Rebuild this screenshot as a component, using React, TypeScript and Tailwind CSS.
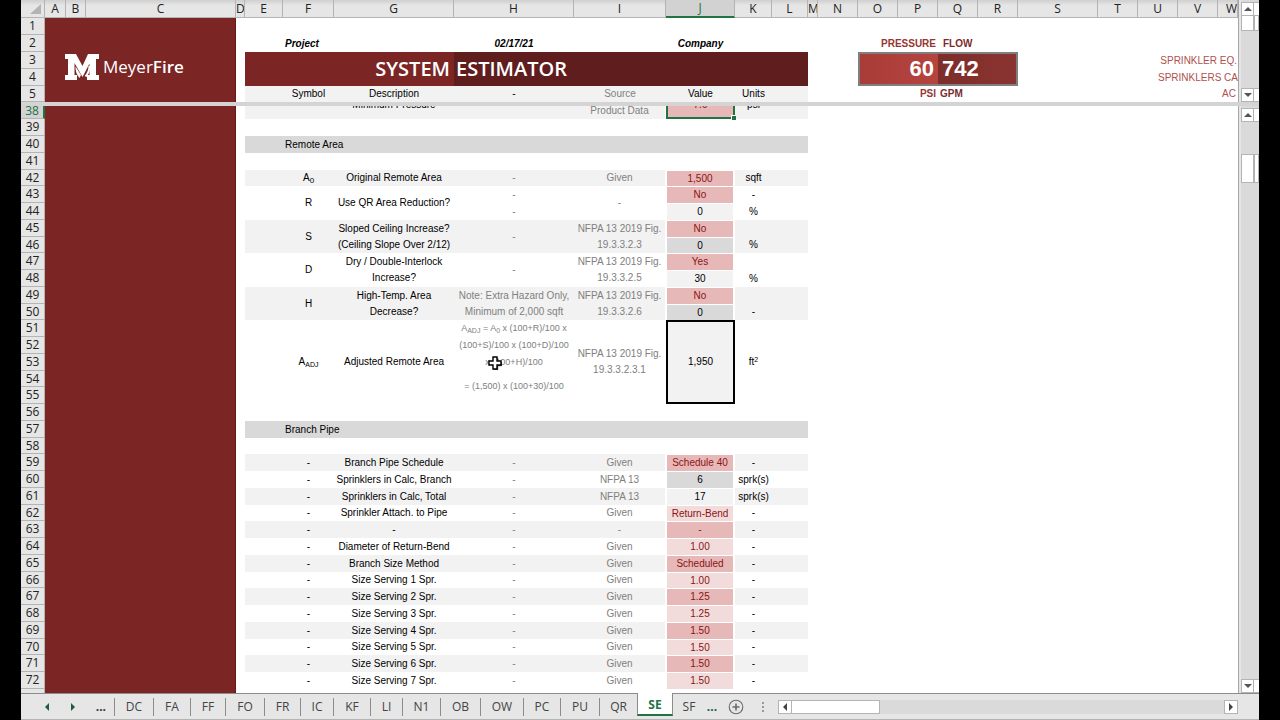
import type { ReactNode } from 'react';
import clsx from 'clsx';

interface Column {
  name: string;
  width: string;
}

interface CellData {
  value: ReactNode;
  span?: number;
}

type CellInput = CellData | string;

interface SheetRow {
  n: number;
  section?: string;
  stripe?: boolean;
  symbol?: CellInput;
  description?: CellInput;
  note?: CellInput;
  source?: CellInput;
  value?: CellInput;
  tone?: keyof typeof TONES;
  units?: CellInput;
}

const TONES = {
  input: 'bg-[#e6b8b7] text-[#8c1414] border-t border-l border-r-2 border-white',
  inputLight: 'bg-[#f2dcdb] text-[#8c1414] border-t border-l border-r-2 border-white',
  calc: 'bg-[#f2f2f2] text-black border-t border-l border-r-2 border-white',
  calcDark: 'bg-[#d9d9d9] text-black border-t border-l border-r-2 border-white',
  result: 'bg-[#f2f2f2] text-black border-2 border-black',
  selected: 'bg-[#e6b8b7] text-[#8c1414] border-2 border-[#217346] relative',
};

const COLUMNS: Column[] = [
  { name: 'A', width: 'w-[21px]' },
  { name: 'B', width: 'w-[20px]' },
  { name: 'C', width: 'w-[150px]' },
  { name: 'D', width: 'w-[9px]' },
  { name: 'E', width: 'w-[38px]' },
  { name: 'F', width: 'w-[51px]' },
  { name: 'G', width: 'w-[120px]' },
  { name: 'H', width: 'w-[120px]' },
  { name: 'I', width: 'w-[92px]' },
  { name: 'J', width: 'w-[69px]' },
  { name: 'K', width: 'w-[37px]' },
  { name: 'L', width: 'w-[36px]' },
  { name: 'M', width: 'w-[10px]' },
  { name: 'N', width: 'w-[40px]' },
  { name: 'O', width: 'w-[40px]' },
  { name: 'P', width: 'w-[40px]' },
  { name: 'Q', width: 'w-[40px]' },
  { name: 'R', width: 'w-[40px]' },
  { name: 'S', width: 'w-[80px]' },
  { name: 'T', width: 'w-[40px]' },
  { name: 'U', width: 'w-[40px]' },
  { name: 'V', width: 'w-[40px]' },
  { name: 'W', width: '' },
];

const FORMULA = (
  <>
    <p>
      A<sub className="text-[7px]">ADJ</sub> = A<sub className="text-[7px]">0</sub> x (100+R)/100 x
    </p>
    <p>(100+S)/100 x (100+D)/100</p>
    <p>x (100+H)/100</p>
    <p className="mt-[7px]">= (1,500) x (100+30)/100</p>
    <CrossCursor />
  </>
);

const ROWS: SheetRow[] = [
  {
    n: 37,
    stripe: true,
    symbol: { value: '-', span: 2 },
    description: { value: 'Minimum Pressure', span: 2 },
    note: { value: '', span: 2 },
    source: '',
    value: { value: '7.0', span: 2 },
    tone: 'selected',
    units: { value: 'psi', span: 2 },
  },
  { n: 38, stripe: true, source: 'Product Data' },
  { n: 39 },
  { n: 40, section: 'Remote Area' },
  { n: 41 },
  {
    n: 42,
    stripe: true,
    symbol: {
      value: (
        <>
          A<sub className="text-[8px]">0</sub>
        </>
      ),
    },
    description: 'Original Remote Area',
    note: '-',
    source: 'Given',
    value: '1,500',
    tone: 'input',
    units: 'sqft',
  },
  {
    n: 43,
    symbol: { value: 'R', span: 2 },
    description: { value: 'Use QR Area Reduction?', span: 2 },
    note: '-',
    source: { value: '-', span: 2 },
    value: 'No',
    tone: 'input',
    units: '-',
  },
  { n: 44, note: '-', value: '0', tone: 'calc', units: '%' },
  {
    n: 45,
    stripe: true,
    symbol: { value: 'S', span: 2 },
    description: { value: 'Sloped Ceiling Increase? (Ceiling Slope Over 2/12)', span: 2 },
    note: { value: '-', span: 2 },
    source: { value: 'NFPA 13 2019 Fig. 19.3.3.2.3', span: 2 },
    value: 'No',
    tone: 'input',
    units: '',
  },
  { n: 46, stripe: true, value: '0', tone: 'calcDark', units: '%' },
  {
    n: 47,
    symbol: { value: 'D', span: 2 },
    description: { value: 'Dry / Double-Interlock Increase?', span: 2 },
    note: { value: '-', span: 2 },
    source: { value: 'NFPA 13 2019 Fig. 19.3.3.2.5', span: 2 },
    value: 'Yes',
    tone: 'input',
    units: '',
  },
  { n: 48, value: '30', tone: 'calc', units: '%' },
  {
    n: 49,
    stripe: true,
    symbol: { value: 'H', span: 2 },
    description: { value: 'High-Temp. Area Decrease?', span: 2 },
    note: { value: 'Note: Extra Hazard Only, Minimum of 2,000 sqft', span: 2 },
    source: { value: 'NFPA 13 2019 Fig. 19.3.3.2.6', span: 2 },
    value: 'No',
    tone: 'input',
    units: '',
  },
  { n: 50, stripe: true, value: '0', tone: 'calcDark', units: '-' },
  {
    n: 51,
    symbol: {
      value: (
        <>
          A<sub className="text-[7px]">ADJ</sub>
        </>
      ),
      span: 5,
    },
    description: { value: 'Adjusted Remote Area', span: 5 },
    note: { value: FORMULA, span: 5 },
    source: { value: 'NFPA 13 2019 Fig. 19.3.3.2.3.1', span: 5 },
    value: { value: '1,950', span: 5 },
    tone: 'result',
    units: {
      value: (
        <>
          ft<sup className="text-[7px]">2</sup>
        </>
      ),
      span: 5,
    },
  },
  { n: 52 },
  { n: 53 },
  { n: 54 },
  { n: 55 },
  { n: 56 },
  { n: 57, section: 'Branch Pipe' },
  { n: 58 },
  pipeRow(59, 'Branch Pipe Schedule', 'Given', 'Schedule 40', 'input'),
  pipeRow(60, 'Sprinklers in Calc, Branch', 'NFPA 13', '6', 'calcDark', 'sprk(s)'),
  pipeRow(61, 'Sprinklers in Calc, Total', 'NFPA 13', '17', 'calc', 'sprk(s)'),
  pipeRow(62, 'Sprinkler Attach. to Pipe', 'Given', 'Return-Bend', 'inputLight'),
  pipeRow(63, '-', '-', '-', 'input'),
  pipeRow(64, 'Diameter of Return-Bend', 'Given', '1.00', 'inputLight'),
  pipeRow(65, 'Branch Size Method', 'Given', 'Scheduled', 'input'),
  pipeRow(66, 'Size Serving 1 Spr.', 'Given', '1.00', 'inputLight'),
  pipeRow(67, 'Size Serving 2 Spr.', 'Given', '1.25', 'input'),
  pipeRow(68, 'Size Serving 3 Spr.', 'Given', '1.25', 'inputLight'),
  pipeRow(69, 'Size Serving 4 Spr.', 'Given', '1.50', 'input'),
  pipeRow(70, 'Size Serving 5 Spr.', 'Given', '1.50', 'inputLight'),
  pipeRow(71, 'Size Serving 6 Spr.', 'Given', '1.50', 'input'),
  pipeRow(72, 'Size Serving 7 Spr.', 'Given', '1.50', 'inputLight'),
];

const TABS = [
  { name: 'DC', width: 'w-[39px]' },
  { name: 'FA', width: 'w-[37px]' },
  { name: 'FF', width: 'w-[35px]' },
  { name: 'FO', width: 'w-[39px]' },
  { name: 'FR', width: 'w-[36px]' },
  { name: 'IC', width: 'w-[33px]' },
  { name: 'KF', width: 'w-[37px]' },
  { name: 'LI', width: 'w-[32px]' },
  { name: 'N1', width: 'w-[38px]' },
  { name: 'OB', width: 'w-[40px]' },
  { name: 'OW', width: 'w-[43px]' },
  { name: 'PC', width: 'w-[37px]' },
  { name: 'PU', width: 'w-[39px]' },
  { name: 'QR', width: 'w-[38px]' },
  { name: 'SE', width: 'w-[36px]' },
  { name: 'SF', width: 'w-[32px]' },
];

function pipeRow(
  n: number,
  description: string,
  source: string,
  value: string,
  tone: keyof typeof TONES,
  units = '-',
): SheetRow {
  return { n, stripe: n % 2 === 1, symbol: '-', description, note: '-', source, value, tone, units };
}

function CrossCursor() {
  return (
    <svg className="absolute left-[34px] top-[36px]" width="14" height="14" viewBox="0 0 14 14" aria-hidden="true">
      <path d="M5 1h4v4h4v4h-4v4h-4v-4h-4v-4h4z" fill="#fff" stroke="#000" strokeWidth="1.4" />
      <path d="M9.7 2v2.8M13.7 6v3.7h-4v4h-4" fill="none" stroke="#000" strokeWidth="0.8" />
    </svg>
  );
}

function Logo() {
  return (
    <div className='flex items-center gap-1 pl-5 pt-[13px] font-["Open_Sans",sans-serif] text-white'>
      <svg width="34" height="26" viewBox="0 0 34 26" aria-hidden="true">
        <path d="M0 0h11l6.500 12L23 0h11v5h-3v16h3v5H22v-5h2.500V9.500L17.500 23 9.500 9v12H12v5H0v-5h3V5H0z" fill="#fff" />
        <path d="M24.500 12c0 4-1 7-4 10.500" fill="none" stroke="#fff" strokeWidth="2" />
        <path d="M10.500 12.500c2 2.500 3 5 5.500 8.500l-1.500 3c-2.500-3-4-6-4-11.500z" fill="#fff" />
      </svg>
      <span className="text-[17px] leading-[26px]">
        Meyer<span className="font-semibold">Fire</span>
      </span>
    </div>
  );
}

function ColGroup() {
  return (
    <colgroup>
      <col className="w-[24px]" />
      {COLUMNS.map((c) => (
        <col key={c.name} className={c.width} />
      ))}
    </colgroup>
  );
}

function RowNumber({ n }: { n: number }) {
  return (
    <th
      scope="row"
      className={clsx(
        'border-b border-[#b4b4b4] p-0 text-center font-["Open_Sans",sans-serif] text-xs font-normal leading-[14px]',
        n === 38 ? 'border-r-2 border-r-[#217346] bg-[#d2d2d2] text-[#217346]' : 'border-r bg-[#e6e6e6] text-[#222]',
      )}
    >
      {n}
    </th>
  );
}

function Cell({ cell, className, children }: { cell?: CellInput; className?: string; children?: ReactNode }) {
  if (cell === undefined) return null;
  const data = typeof cell === 'string' ? { value: cell } : cell;
  return (
    <td rowSpan={data.span} className={clsx('px-0 text-center', className)}>
      {data.value}
      {children}
    </td>
  );
}

function BodyRow({ row, first }: { row: SheetRow; first: boolean }) {
  const fill = clsx(row.stripe && 'bg-[#f2f2f2]', first ? 'pb-0 pt-1' : 'py-0');
  const merged = row.n > 51 && row.n < 56;
  const blank = !merged && !row.section && row.units === undefined && row.source === undefined;

  return (
    <tr className={row.n % 4 === 2 ? 'h-4' : 'h-[17px]'}>
      <RowNumber n={row.n} />
      {first && <td colSpan={3} rowSpan={ROWS.length + 1} className="border-r border-[#5f1d1d] bg-[#7b2525]" />}
      <td />
      {row.section && (
        <>
          <td className="bg-[#d9d9d9]" />
          <td colSpan={7} className="bg-[#d9d9d9] p-0 pl-[2px]">
            {row.section}
          </td>
        </>
      )}
      {blank && <td colSpan={8} />}
      {!row.section && !blank && !merged && (
        <>
          <td className={fill} />
          <Cell cell={row.symbol} className={fill} />
          <Cell cell={row.description} className={fill} />
          <Cell
            cell={row.note}
            className={clsx(fill, 'text-[#808080]', row.n === 51 && 'relative align-top text-[9px] leading-[17px]')}
          />
          <Cell
            cell={row.source}
            className={clsx(row.stripe && 'bg-[#f2f2f2]', 'border-r border-white py-0 text-[#808080]')}
          />
          <Cell
            cell={row.value}
            className={clsx('leading-[14px]', first ? 'pb-0 pt-1' : 'py-0', row.tone && TONES[row.tone])}
          >
            {row.tone === 'selected' && (
              <span className="absolute -bottom-[3px] -right-[3px] size-[5px] border-l border-t border-white bg-[#217346]" />
            )}
          </Cell>
          <Cell cell={row.units} className={fill} />
          <td className={fill} />
        </>
      )}
      {merged && (
        <>
          <td />
          <td />
        </>
      )}
      <td colSpan={11} />
    </tr>
  );
}

function FrozenPane() {
  return (
    <table className="w-full table-fixed border-separate border-spacing-0">
      <ColGroup />
      <thead>
        <tr className='h-[18px] bg-linear-to-b from-[#cfcfcf] to-[#e6e6e6] to-30% font-["Open_Sans",sans-serif] text-xs text-[#222]'>
          <th className="border-b border-r border-[#b4b4b4] p-0">
            <svg className="ml-2" width="13" height="12" viewBox="0 0 13 12" aria-hidden="true">
              <path d="M12 1v10H1z" fill="#b4b4b4" />
            </svg>
          </th>
          {COLUMNS.map((c) => (
            <th
              key={c.name}
              scope="col"
              className={clsx(
                'overflow-hidden border-r p-0 font-normal leading-4',
                c.name === 'W' ? 'text-right' : 'text-center',
                c.name === 'J'
                  ? 'border-b-2 border-b-[#217346] border-r-[#b4b4b4] bg-[#d2d2d2] text-[#217346]'
                  : 'border-b border-[#b4b4b4]',
              )}
            >
              {c.name}
            </th>
          ))}
        </tr>
      </thead>
      <tbody>
        <tr className="h-[17px]">
          <RowNumber n={1} />
          <td colSpan={3} rowSpan={5} className="border-r border-[#5f1d1d] bg-[#7b2525] p-0">
            <Logo />
          </td>
          <td colSpan={20} />
        </tr>
        <tr className="h-[17px]">
          <RowNumber n={2} />
          <td colSpan={2} />
          <td className="p-0 pl-[2px] font-bold italic">Project</td>
          <td />
          <td className="p-0 text-center font-bold italic">02/17/21</td>
          <td />
          <td className="p-0 text-center font-bold italic">Company</td>
          <td colSpan={4} />
          <td colSpan={2} className="p-0 pr-[2px] text-right font-bold text-[#963634]">
            PRESSURE
          </td>
          <td colSpan={2} className="p-0 pl-[5px] font-bold text-[#7b2c2a]">
            FLOW
          </td>
          <td colSpan={5} />
        </tr>
        <tr className="h-[17px]">
          <RowNumber n={3} />
          <td rowSpan={2} />
          <td
            colSpan={3}
            rowSpan={2}
            className='bg-[#7b2525] p-0 pr-1 text-right font-["Open_Sans",sans-serif] text-xl font-semibold text-white'
          >
            SYSTEM
          </td>
          <td
            colSpan={5}
            rowSpan={2}
            className='bg-[#5f1d1d] p-0 pl-[2px] font-["Open_Sans",sans-serif] text-xl font-semibold text-white'
          >
            ESTIMATOR
          </td>
          <td colSpan={2} rowSpan={2} />
          <td
            colSpan={2}
            rowSpan={2}
            className="border-2 border-r-0 border-[#7f7f7f] bg-linear-to-r from-[#a93c38] to-[#b5443f] p-0 pr-1 text-right text-[22px] font-bold leading-[30px] text-white"
          >
            60
          </td>
          <td
            colSpan={2}
            rowSpan={2}
            className="border-2 border-l-0 border-[#7f7f7f] bg-linear-to-r from-[#7d2d2a] to-[#8b3431] p-0 pl-1 text-[22px] font-bold leading-[30px] text-white"
          >
            742
          </td>
          <td colSpan={2} />
          <td colSpan={3} className="whitespace-nowrap p-0 pr-[1px] text-right text-[#b0504d]">
            SPRINKLER EQ.
          </td>
        </tr>
        <tr className="h-[17px]">
          <RowNumber n={4} />
          <td colSpan={2} />
          <td colSpan={3} className="whitespace-nowrap p-0 text-right text-[#b0504d]">
            SPRINKLERS CA
          </td>
        </tr>
        <tr className="h-4">
          <RowNumber n={5} />
          <td />
          <td className="bg-[#f2f2f2]" />
          <td className="bg-[#f2f2f2] p-0 text-center">Symbol</td>
          <td className="bg-[#f2f2f2] p-0 text-center">Description</td>
          <td className="bg-[#f2f2f2] p-0 text-center">-</td>
          <td className="bg-[#f2f2f2] p-0 text-center text-[#808080]">Source</td>
          <td className="bg-[#f2f2f2] p-0 text-center">Value</td>
          <td className="bg-[#f2f2f2] p-0 text-center">Units</td>
          <td className="bg-[#f2f2f2]" />
          <td colSpan={2} />
          <td colSpan={2} className="p-0 pr-[2px] text-right font-bold text-[#963634]">
            PSI
          </td>
          <td colSpan={2} className="p-0 pl-[2px] font-bold text-[#7b2c2a]">
            GPM
          </td>
          <td colSpan={4} />
          <td className="p-0 pr-[2px] text-right text-[#b0504d]">AC</td>
        </tr>
      </tbody>
    </table>
  );
}

function ScrollPane() {
  return (
    <table className="-mt-5 w-full table-fixed border-separate border-spacing-0">
      <ColGroup />
      <tbody>
        {ROWS.map((row, i) => (
          <BodyRow key={row.n} row={row} first={i === 0} />
        ))}
        <tr className="h-[17px]">
          <th className="border-r border-[#b4b4b4] bg-[#e6e6e6]" />
          <td colSpan={20} />
        </tr>
      </tbody>
    </table>
  );
}

function Arrow({ className }: { className: string }) {
  return (
    <svg className={className} width="8" height="8" viewBox="0 0 8 8" aria-hidden="true">
      <path d="M0 6l4-4 4 4z" fill="currentColor" />
    </svg>
  );
}

function VerticalScroll({ label, children }: { label: string; children: ReactNode }) {
  const button = 'flex h-[14px] w-full items-center justify-center border border-[#b4b4b4] bg-white text-[#555]';
  return (
    <div className="flex w-[21px] shrink-0 border-l border-[#a6a6a6] bg-[#e6e6e6] pl-[2px]">
      <div className="flex w-[13px] flex-col bg-[#dadada] pt-[2px]">
        <button type="button" aria-label={`Scroll ${label} up`} className={button}>
          <Arrow className="shrink-0" />
        </button>
        {children}
        <button type="button" aria-label={`Scroll ${label} down`} className={button}>
          <Arrow className="shrink-0 rotate-180" />
        </button>
      </div>
      {/* edge of the outer window's own scrollbar */}
      <div className="flex w-[5px] flex-col bg-[#dadada] pt-[2px]">
        <div className="h-[14px] border-y border-[#b4b4b4] bg-white" />
        {children}
        <div className="h-[14px] border-y border-[#b4b4b4] bg-white" />
      </div>
    </div>
  );
}

function SheetTabs() {
  return (
    <div className="flex h-[27px] shrink-0 items-start border-b border-[#b4b4b4] bg-[#e6e6e6]">
      <nav className='flex items-start font-["Open_Sans",sans-serif] text-xs text-[#444]' aria-label="Sheets">
        <div className="flex h-[26px] w-[93px] items-center justify-between border-t border-[#8c8c8c] pl-[22px] pr-2 text-[#1e5c3a]">
          <button type="button" aria-label="Previous sheet">
            <Arrow className="-rotate-90" />
          </button>
          <button type="button" aria-label="Next sheet">
            <Arrow className="rotate-90" />
          </button>
          <button type="button" className="font-bold text-[#333]">
            ...
          </button>
        </div>
        {TABS.map((tab) => (
          <button
            key={tab.name}
            type="button"
            aria-current={tab.name === 'SE' ? 'page' : undefined}
            className={clsx(
              'h-[23px] pt-[3px] text-center',
              tab.width,
              tab.name === 'SE'
                ? 'border-x border-b-2 border-x-[#8c8c8c] border-b-[#217346] bg-white font-bold text-[#217346]'
                : 'border-t border-[#8c8c8c]',
            )}
          >
            <span
              className={clsx(
                'block leading-[18px]',
                tab.name !== 'SE' && tab.name !== 'SF' && 'border-l border-[#8c8c8c]',
              )}
            >
              {tab.name}
            </span>
          </button>
        ))}
      </nav>
      <div className="flex h-[26px] flex-1 items-center border-t border-[#8c8c8c] pl-[1px] pr-[21px]">
        <button type="button" className='w-3 font-["Open_Sans",sans-serif] text-xs font-bold text-[#1e5c3a]'>
          ...
        </button>
        <button type="button" aria-label="New sheet" className="ml-[10px]">
          <svg width="16" height="16" viewBox="0 0 16 16" fill="none" stroke="#6b6b6b" aria-hidden="true">
            <circle cx="8" cy="8" r="6.800" strokeWidth="1.1" />
            <path d="M8 4.500v7M4.500 8h7" strokeWidth="1.6" />
          </svg>
        </button>
        <svg className="ml-[17px]" width="4" height="12" viewBox="0 0 4 12" fill="#999" aria-hidden="true">
          <path d="M1 1h2v2h-2zM1 5h2v2h-2zM1 9h2v2h-2z" />
        </svg>
        <div className="ml-[13px] flex h-[14px] flex-1 bg-[#dadada] text-[#444]">
          <button
            type="button"
            aria-label="Scroll left"
            className="flex w-[14px] items-center justify-center border border-[#b4b4b4] bg-white"
          >
            <Arrow className="shrink-0 -rotate-90" />
          </button>
          <div className="w-[88px] border border-l-0 border-[#b4b4b4] bg-white" />
          <div className="flex-1" />
          <button
            type="button"
            aria-label="Scroll right"
            className="flex w-[14px] items-center justify-center border border-[#b4b4b4] bg-white"
          >
            <Arrow className="shrink-0 rotate-90" />
          </button>
        </div>
      </div>
    </div>
  );
}

export default function App() {
  return (
    <div className='flex h-screen bg-black px-[21px] font-["Liberation_Sans",Arial,sans-serif] text-[10px] leading-4 text-black'>
      <main className="flex min-w-0 flex-1 flex-col bg-white">
        <div className="flex shrink-0">
          <div className="min-w-0 flex-1 overflow-hidden">
            <FrozenPane />
          </div>
          <VerticalScroll label="top pane">
            <div className="h-[15px] border border-t-0 border-[#b4b4b4] bg-white" />
            <div className="flex-1" />
          </VerticalScroll>
        </div>
        <div className="h-1 shrink-0 bg-[#d4d4d4]" />
        <div className="flex min-h-0 flex-1">
          <div className="min-w-0 flex-1 overflow-hidden">
            <ScrollPane />
          </div>
          <VerticalScroll label="bottom pane">
            <div className="h-8" />
            <div className="h-[29px] border border-[#b4b4b4] bg-white" />
            <div className="flex-1" />
          </VerticalScroll>
        </div>
        <SheetTabs />
      </main>
    </div>
  );
}
